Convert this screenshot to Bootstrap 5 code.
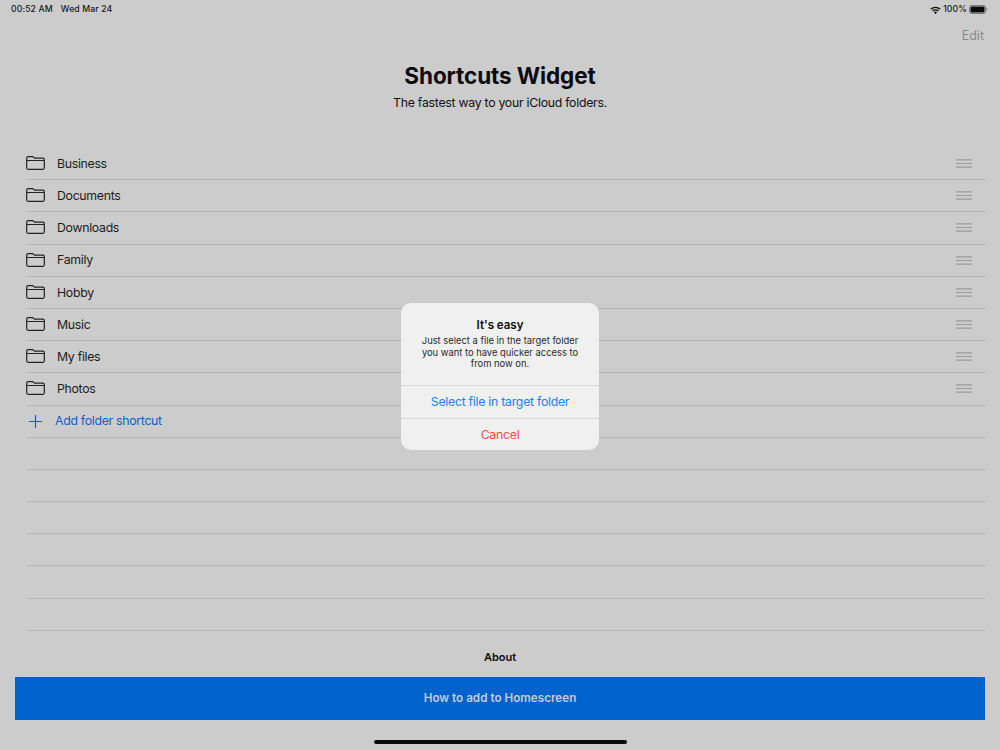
<!DOCTYPE html>
<html lang="en">
<head>
<meta charset="utf-8">
<title>Shortcuts Widget</title>
<link href="https://cdn.jsdelivr.net/npm/bootstrap@5.3.0/dist/css/bootstrap.min.css" rel="stylesheet">
<style>
html,body{height:750px;overflow:hidden}
body{background:#cccccc;font-family:Inter,"Liberation Sans",sans-serif;color:#0a0a0a}
.screen{width:1000px;height:750px}
.statusbar{height:18px;padding:2px 12px 0 11px;font-size:8.7px;font-weight:500;color:#1a1a1a;letter-spacing:.1px}
.editbar{height:36px;padding-right:16px;font-size:12.5px;color:#8a8a8a}
.hero{padding-top:4px;height:94px}
.hero h1{font-size:22.5px;font-weight:700;line-height:35px;margin:0;letter-spacing:-.1px}
.hero p{font-size:12.3px;letter-spacing:-.27px;line-height:20px;margin:0;color:#111}
.rows{padding-left:27px;padding-right:15px}
.rowline{height:32.2px;border-bottom:1px solid #b4b4b4;font-size:12.3px;letter-spacing:-.3px;color:#1c1c1c}
.rowlabel{padding-top:1px}
.fold{margin-left:-1px;width:19px;margin-right:12px;margin-bottom:1px}
.grip{margin-right:13px;width:16px;height:9px;flex:none}
.addtext{color:#0a60c8;margin-left:12px;padding-top:1px}
.plus{width:15px;margin-left:1px}
.aboutline{height:46px;padding-top:13px;font-size:11px;font-weight:600;text-align:center;line-height:26px;color:#0c0c0c}
.cta{height:43.500px;margin:0 15px;background:#0062cc;border:0;border-radius:0;color:#c3cbd6;font-size:11.7px;font-weight:600;width:970px;padding:0;display:block}
.cta:hover{background:#0062cc;color:#c3cbd6}
.homebar{width:253px;height:3.5px;background:#0a0a0a;border-radius:2px;margin:20px auto 0}
.sheet{position:absolute;left:401px;top:303px;width:198px;height:147px;background:#f0f0f0;border-radius:10px;text-align:center}
.sheet-body{height:82.500px;padding-top:14px;border-bottom:1px solid #d8d8d8}
.sheet-title{font-size:11.5px;font-weight:600;line-height:16px;color:#0a0a0a}
.sheet-copy{font-size:9.4px;line-height:11.7px;color:#2a2a2a;margin-top:2px}
.sheet-act{height:32px;font-size:12.3px;letter-spacing:-.27px;line-height:31.500px;color:#1a82f7}
.sheet-act+.sheet-act{border-top:1px solid #d8d8d8}
.sheet-act.danger{color:#fb4a42}
</style>
</head>
<body>
<div class="screen position-relative">
  <div class="statusbar d-flex align-items-center justify-content-between">
    <div class="d-flex gap-2"><span>00:52 AM</span><span>Wed Mar 24</span></div>
    <div class="d-flex align-items-center" style="gap:2px">
      <svg width="11" height="8" viewBox="0 0 11 8"><path d="M.4 2.800A7.200 7.200 0 0 1 10.600 2.800L9.600 3.800A5.800 5.800 0 0 0 1.400 3.800Z M2.200 4.600A4.600 4.600 0 0 1 8.800 4.600L7.800 5.600A3.200 3.200 0 0 0 3.200 5.600Z M4 6.400A2 2 0 0 1 7 6.400L5.500 8Z" fill="#111"/></svg>
      <span>100%</span>
      <svg width="19" height="9" viewBox="0 0 19 9"><rect x=".5" y=".5" width="16" height="8" rx="2" fill="none" stroke="#777"/><rect x="1.5" y="1.5" width="14" height="6" rx="1" fill="#0a0a0a"/><path d="M17.600 3v3c.7-.2 1-.8 1-1.500s-.3-1.300-1-1.500z" fill="#777"/></svg>
    </div>
  </div>
  <div class="editbar d-flex align-items-center justify-content-end">Edit</div>
  <div class="hero text-center">
    <h1>Shortcuts Widget</h1>
    <p>The fastest way to your iCloud folders.</p>
  </div>
  <div class="rows">
    <div class="rowline d-flex align-items-center"><svg class="fold" height="14" viewBox="0 0 19 14"><path d="M.7 11.200V2.200Q.7.700 2.200.700H6.300Q7.200.700 7.800 1.300L8.600 2.200H16.800Q18.300 2.200 18.300 3.700V11.800Q18.300 13.300 16.800 13.300H2.200Q.7 13.300.7 11.800ZM.7 4.500H18.300" fill="none" stroke="#222" stroke-width="1.200"/></svg><span class="flex-grow-1 rowlabel">Business</span><svg class="grip" viewBox="0 0 16 9"><path d="M0 .9H16M0 4.500H16M0 8.100H16" stroke="#9c9c9c" stroke-width="1.200"/></svg></div>
    <div class="rowline d-flex align-items-center"><svg class="fold" height="14" viewBox="0 0 19 14"><path d="M.7 11.200V2.200Q.7.700 2.200.700H6.300Q7.200.700 7.800 1.300L8.600 2.200H16.800Q18.300 2.200 18.300 3.700V11.800Q18.300 13.300 16.800 13.300H2.200Q.7 13.300.7 11.800ZM.7 4.500H18.300" fill="none" stroke="#222" stroke-width="1.200"/></svg><span class="flex-grow-1 rowlabel">Documents</span><svg class="grip" viewBox="0 0 16 9"><path d="M0 .9H16M0 4.500H16M0 8.100H16" stroke="#9c9c9c" stroke-width="1.200"/></svg></div>
    <div class="rowline d-flex align-items-center"><svg class="fold" height="14" viewBox="0 0 19 14"><path d="M.7 11.200V2.200Q.7.700 2.200.700H6.300Q7.200.700 7.800 1.300L8.600 2.200H16.800Q18.300 2.200 18.300 3.700V11.800Q18.300 13.300 16.800 13.300H2.200Q.7 13.300.7 11.800ZM.7 4.500H18.300" fill="none" stroke="#222" stroke-width="1.200"/></svg><span class="flex-grow-1 rowlabel">Downloads</span><svg class="grip" viewBox="0 0 16 9"><path d="M0 .9H16M0 4.500H16M0 8.100H16" stroke="#9c9c9c" stroke-width="1.200"/></svg></div>
    <div class="rowline d-flex align-items-center"><svg class="fold" height="14" viewBox="0 0 19 14"><path d="M.7 11.200V2.200Q.7.700 2.200.700H6.300Q7.200.700 7.800 1.300L8.600 2.200H16.800Q18.300 2.200 18.300 3.700V11.800Q18.300 13.300 16.800 13.300H2.200Q.7 13.300.7 11.800ZM.7 4.500H18.300" fill="none" stroke="#222" stroke-width="1.200"/></svg><span class="flex-grow-1 rowlabel">Family</span><svg class="grip" viewBox="0 0 16 9"><path d="M0 .9H16M0 4.500H16M0 8.100H16" stroke="#9c9c9c" stroke-width="1.200"/></svg></div>
    <div class="rowline d-flex align-items-center"><svg class="fold" height="14" viewBox="0 0 19 14"><path d="M.7 11.200V2.200Q.7.700 2.200.700H6.300Q7.200.700 7.800 1.300L8.600 2.200H16.800Q18.300 2.200 18.300 3.700V11.800Q18.300 13.300 16.800 13.300H2.200Q.7 13.300.7 11.800ZM.7 4.500H18.300" fill="none" stroke="#222" stroke-width="1.200"/></svg><span class="flex-grow-1 rowlabel">Hobby</span><svg class="grip" viewBox="0 0 16 9"><path d="M0 .9H16M0 4.500H16M0 8.100H16" stroke="#9c9c9c" stroke-width="1.200"/></svg></div>
    <div class="rowline d-flex align-items-center"><svg class="fold" height="14" viewBox="0 0 19 14"><path d="M.7 11.200V2.200Q.7.700 2.200.700H6.300Q7.200.700 7.800 1.300L8.600 2.200H16.800Q18.300 2.200 18.300 3.700V11.800Q18.300 13.300 16.800 13.300H2.200Q.7 13.300.7 11.800ZM.7 4.500H18.300" fill="none" stroke="#222" stroke-width="1.200"/></svg><span class="flex-grow-1 rowlabel">Music</span><svg class="grip" viewBox="0 0 16 9"><path d="M0 .9H16M0 4.500H16M0 8.100H16" stroke="#9c9c9c" stroke-width="1.200"/></svg></div>
    <div class="rowline d-flex align-items-center"><svg class="fold" height="14" viewBox="0 0 19 14"><path d="M.7 11.200V2.200Q.7.700 2.200.700H6.300Q7.200.700 7.800 1.300L8.600 2.200H16.800Q18.300 2.200 18.300 3.700V11.800Q18.300 13.300 16.800 13.300H2.200Q.7 13.300.7 11.800ZM.7 4.500H18.300" fill="none" stroke="#222" stroke-width="1.200"/></svg><span class="flex-grow-1 rowlabel">My files</span><svg class="grip" viewBox="0 0 16 9"><path d="M0 .9H16M0 4.500H16M0 8.100H16" stroke="#9c9c9c" stroke-width="1.200"/></svg></div>
    <div class="rowline d-flex align-items-center"><svg class="fold" height="14" viewBox="0 0 19 14"><path d="M.7 11.200V2.200Q.7.700 2.200.700H6.300Q7.200.700 7.800 1.300L8.600 2.200H16.800Q18.300 2.200 18.300 3.700V11.800Q18.300 13.300 16.800 13.300H2.200Q.7 13.300.7 11.800ZM.7 4.500H18.300" fill="none" stroke="#222" stroke-width="1.200"/></svg><span class="flex-grow-1 rowlabel">Photos</span><svg class="grip" viewBox="0 0 16 9"><path d="M0 .9H16M0 4.500H16M0 8.100H16" stroke="#9c9c9c" stroke-width="1.200"/></svg></div>
    <div class="rowline d-flex align-items-center"><svg class="plus" height="15" viewBox="0 0 15 15"><path d="M7.500 1V14M1 7.500H14" stroke="#0a60c8" stroke-width="1.200" fill="none"/></svg><span class="addtext">Add folder shortcut</span></div>
    <div class="rowline"></div>
    <div class="rowline"></div>
    <div class="rowline"></div>
    <div class="rowline"></div>
    <div class="rowline"></div>
    <div class="rowline"></div>
  </div>
  <div class="aboutline">About</div>
  <button type="button" class="btn cta">How to add to Homescreen</button>
  <div class="homebar"></div>
  <div class="sheet">
    <div class="sheet-body">
      <div class="sheet-title">It's easy</div>
      <div class="sheet-copy">Just select a file in the target folder<br>you want to have quicker access to<br>from now on.</div>
    </div>
    <div class="sheet-act">Select file in target folder</div>
    <div class="sheet-act danger">Cancel</div>
  </div>
</div>
</body>
</html>
